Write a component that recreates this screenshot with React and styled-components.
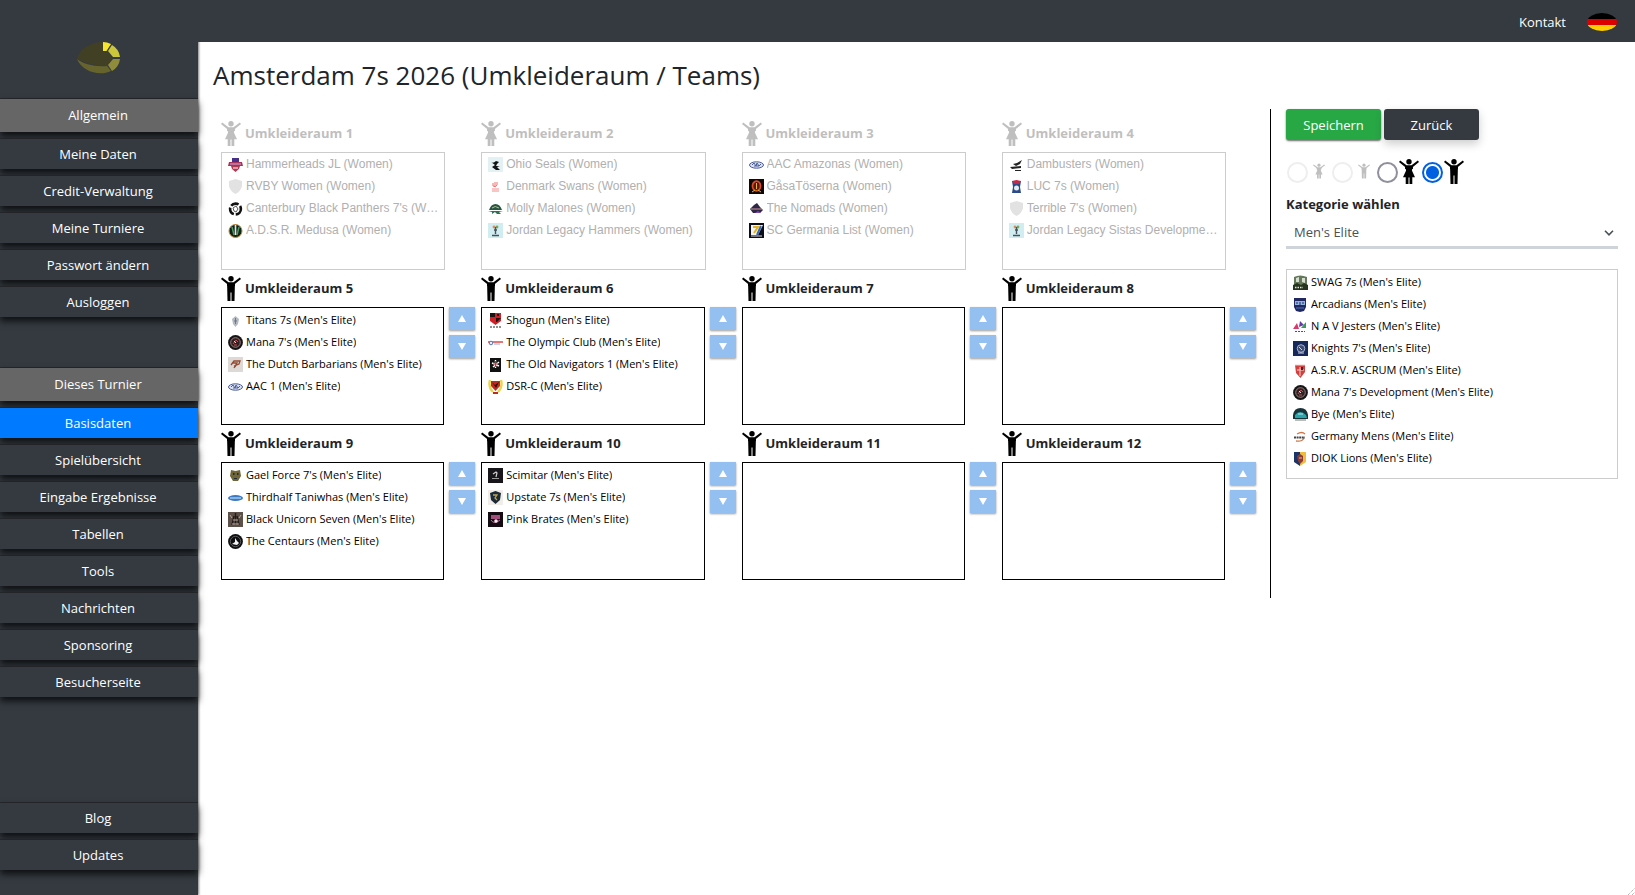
import { useState } from "react";
import styled, { createGlobalStyle, css } from "styled-components";

const colors = {
  dark: "#343a40",
  section: "#666666",
  active: "#007bff",
  green: "#28a745",
  arrow: "#93bff1",
  text: "#212529",
  muted: "#bfbfbf",
};

const GlobalStyle = createGlobalStyle`
  *, *::before, *::after { box-sizing: border-box; }
  body {
    margin: 0;
    background: #fff;
    color: ${colors.text};
    font-family: "Segoe UI", "Open Sans", "Noto Sans", sans-serif;
    font-size: 13px;
    line-height: 20px;
  }
`;

const Layout = styled.div`
  display: flex;
  position: relative;
  min-height: 100vh;
`;

const Sidebar = styled.nav`
  display: flex;
  flex: 0 0 198px;
  flex-direction: column;
  padding-bottom: 25px;
  background: ${colors.dark};
  box-shadow: 1px 0 2px rgba(0, 0, 0, 0.5);
`;

const LogoLink = styled.a`
  display: flex;
  justify-content: center;
  height: 99px;
  padding: 42px 2px 0 0;
`;

const MenuGroup = styled.div`
  display: flex;
  flex-direction: column;
  gap: 7px;
  margin-bottom: 51px;

  &:last-child {
    margin: auto 0 0;
  }
`;

const menuBox = css`
  padding-right: 2px;
  box-shadow: 0 4px 7px rgba(0, 0, 0, 0.75), 0 -1px 0 #25282c;
  color: #fff;
  font-size: 13px;
  text-align: center;
`;

const MenuTitle = styled.div`
  ${menuBox}
  background: ${colors.section};
  line-height: 33px;
`;

const MenuLink = styled.a`
  ${menuBox}
  background: ${({ $active }) => ($active ? colors.active : colors.dark)};
  line-height: 30px;
  text-decoration: none;
`;

const Page = styled.div`
  flex: 1;
  min-width: 0;
`;

const TopBar = styled.header`
  display: flex;
  align-items: center;
  justify-content: flex-end;
  gap: 21px;
  height: 42px;
  padding: 2px 18px 0 0;
  background: ${colors.dark};
`;

const TopLink = styled.a`
  color: #fff;
  text-decoration: none;
`;

const LangButton = styled.button`
  display: flex;
  padding: 0;
  border: 0;
  background: none;
`;

const Title = styled.h1`
  margin: 0;
  padding: 14px 15px 0;
  font-size: 26px;
  font-weight: 400;
  line-height: 38px;
`;

const Content = styled.main`
  display: flex;
  padding: 15px 0 0 15px;
`;

const Rooms = styled.section`
  display: grid;
  flex: 1;
  grid-template-columns: repeat(4, minmax(0, 1fr));
  align-content: start;
  gap: 6px;
  min-width: 0;
  padding: 12px 14px 18px 8px;
`;

const RoomTitle = styled.h2`
  display: flex;
  gap: 4px;
  height: 31px;
  margin: 0;
  color: ${({ $muted }) => ($muted ? colors.muted : colors.text)};
  font-size: 13px;
  font-weight: 700;
  line-height: 24px;
`;

const RoomBody = styled.div`
  display: flex;
  gap: 5px;
  padding-right: ${({ $muted }) => ($muted ? "30px" : "0")};
`;

const TeamList = styled.ul`
  flex: 1;
  min-width: 0;
  min-height: ${({ $tall }) => ($tall ? "210px" : "118px")};
  margin: 0;
  padding: ${({ $muted }) => ($muted ? "0 0 0 6px" : "1px 0 0 6px")};
  border: 1px solid ${({ $border }) => $border};
  color: ${({ $muted }) => ($muted ? "#b0b0b0" : "#000")};
  font-family: ${({ $muted }) => ($muted ? '"Liberation Sans", Arial, sans-serif' : "inherit")};
  font-size: ${({ $muted }) => ($muted ? "12px" : "11px")};
  list-style: none;
`;

const TeamRow = styled.li`
  display: flex;
  align-items: center;
  gap: 3px;
  line-height: 22px;

  svg {
    flex: none;
  }
`;

const TeamName = styled.span`
  overflow: hidden;
  max-width: 195px;
  text-overflow: ellipsis;
  white-space: nowrap;
`;

const Arrows = styled.div`
  display: flex;
  flex-direction: column;
  gap: 5px;
`;

const ArrowButton = styled.button`
  display: flex;
  align-items: center;
  justify-content: center;
  width: 26px;
  height: 23px;
  padding: 0;
  border: 0;
  background: ${colors.arrow};
  box-shadow: 0 1px 2px rgba(0, 0, 0, 0.4);
`;

const Panel = styled.aside`
  flex: 0 0 365px;
  padding: 0 17px 0 15px;
  border-left: 1px solid #000;
`;

const Buttons = styled.div`
  display: flex;
  gap: 3px;
`;

const Button = styled.button`
  width: 95px;
  height: 31px;
  padding: 0;
  border: 0;
  border-radius: 3px;
  background: ${({ $primary }) => ($primary ? colors.green : colors.dark)};
  box-shadow: ${({ $primary }) =>
    $primary ? "0 1px 2px rgba(0, 0, 0, 0.6)" : "0 4px 10px rgba(0, 0, 0, 0.2)"};
  color: #fff;
  font: inherit;
`;

const Genders = styled.div`
  display: flex;
  align-items: center;
  height: 28px;
  margin-top: 18px;
  padding-left: 1px;
`;

const GenderLabel = styled.label`
  display: flex;
  align-items: center;
  width: 45px;

  svg {
    margin: ${({ $small }) => ($small ? "0 0 2px 5px" : "0 0 2px 1px")};
  }
`;

const Radio = styled.input`
  appearance: none;
  flex: none;
  width: 21px;
  height: 21px;
  margin: 1px 0 0;
  border: 2px solid #8f8f9d;
  border-radius: 50%;

  &:checked {
    border-color: #0060df;
    background: radial-gradient(circle, #0060df 6px, #fff 7px);
  }

  &:disabled {
    border-color: #eeeeef;
  }
`;

const CategoryLabel = styled.label`
  display: block;
  margin-top: 8px;
  font-weight: 700;
  line-height: 20px;
`;

const SelectWrap = styled.div`
  display: grid;
  align-items: center;
  margin: 4px 0 20px;

  select,
  svg {
    grid-area: 1 / 1;
  }

  svg {
    justify-self: end;
    margin: 0 4px 2px 0;
    pointer-events: none;
  }
`;

const Select = styled.select`
  appearance: none;
  width: 100%;
  height: 31px;
  padding: 0 8px;
  border: 0;
  border-bottom: 3px solid #ced4da;
  background: #fff;
  color: #495057;
  font: inherit;
`;

const ResizeGrip = styled.svg`
  position: absolute;
  right: 0;
  bottom: 0;
`;

const Person = ({ female, small, color = "#000" }) => (
  <svg width={small ? 12 : 20} height={small ? 16 : 25} viewBox="0 0 20 25" fill={color} aria-hidden="true">
    <circle cx="10" cy="2.8" r="2.7" />
    <path d="M0 2.9 1.2 1.500 7.500 6.200H12.500L18.800 1.500 20 2.900 13.900 8V10H6.100V8Z" />
    {female ? (
      <path d="M6.300 8H13.700L12.900 11.500 16 18.200H13.300V25H10.500V18.500H9.500V25H6.700V18.200H4L7.100 11.500Z" />
    ) : (
      <path d="M6.100 8H13.900L13.500 25H10.500V16.500H9.500V25H6.500Z" />
    )}
  </svg>
);

const Logo = () => (
  <svg width="43" height="32" viewBox="0 0 43 32" aria-label="Logo">
    <path d="M0 16C4 6 14 0 26 0V9L31 10 35 16 31 24C20 24 6 21 0 16Z" fill="#424024" />
    <path d="M0 17C6 22 18 25 30 24L34 29C22 35 5 29 0 17Z" fill="#66642c" />
    <path d="M26 0Q30 0 34 2L29.5 9H26Z" fill="#f5e62c" />
    <path d="M35 3Q42 7 43 15H36L31 9Z" fill="#ccc63a" />
    <path d="M36 17H43Q42 25 35 29L31 23Z" fill="#8f8c3b" />
  </svg>
);

const Flag = () => (
  <svg width="30" height="18" viewBox="0 0 30 18" aria-label="Deutsch">
    <clipPath id="flag">
      <ellipse cx="15" cy="9" rx="15" ry="9" />
    </clipPath>
    <g clipPath="url(#flag)">
      <rect width="30" height="6" fill="#000" />
      <rect y="6" width="30" height="6" fill="#d00" />
      <rect y="12" width="30" height="6" fill="#ffce00" />
    </g>
  </svg>
);

const Triangle = ({ down }) => (
  <svg width="8" height="7" viewBox="0 0 8 7" fill="#fff" aria-hidden="true">
    <path d={down ? "M0 0H8L4 7Z" : "M4 0 8 7H0Z"} />
  </svg>
);

// club crests, all drawn on a 15 x 15 grid
const crests = {
  hammer: (
    <>
      <path d="M4 1H11V5H4Z" fill="#46308a" />
      <path d="M1 5H14L15 9H0Z" fill="#a8325a" />
      <path d="M2 7H13" stroke="#c9b4dc" />
      <path d="M3 9H12L11 12 7.5 15 4 12Z" fill="#b33a52" />
      <path d="M5 11H10" stroke="#fff" />
    </>
  ),
  shield: <path d="M7.5 0 14 2V7Q13 12 7.5 15Q2 12 1 7V2Z" fill="#e2e2e2" />,
  panther: (
    <>
      <circle cx="7.5" cy="8" r="5.4" fill="#fff" stroke="#111" strokeWidth="2.6" strokeDasharray="8 2" />
      <path d="M5 7 8 5 10 8 8 11 6 10Z" fill="none" stroke="#555" strokeWidth="1" />
    </>
  ),
  medusa: (
    <>
      <circle cx="7.5" cy="8" r="6.5" fill="#10231a" stroke="#b98a3c" />
      <path d="M4 4 6 12M11 4 9 12" stroke="#4c9a58" strokeWidth="1.5" />
      <path d="M7.5 2V12" stroke="#dfe8df" strokeWidth="1.6" />
    </>
  ),
  seal: (
    <>
      <rect width="15" height="15" fill="#e3f1f5" />
      <path d="M3 5Q5 7 8 4L11 5 9 7 8 9 12 9 9 10 12 13H8L4 10 7 8Z" fill="#111" />
    </>
  ),
  swan: (
    <>
      <path d="M5 4V7Q8 9 9 6V3M7 3V8" fill="none" stroke="#f07070" />
      <path d="M4 10H11M4 12H11" stroke="#f48a8a" />
    </>
  ),
  turtle: (
    <>
      <path d="M1 9Q3 3 7.5 3Q12 3 14 9Z" fill="#245644" />
      <path d="M4 7Q7 4 11 7" stroke="#c7b98c" fill="none" />
      <path d="M0 10H15L11 11 13 13H9L7 11 4 13 4 11Z" fill="#2f7055" />
    </>
  ),
  jordan: (
    <>
      <rect width="15" height="15" fill="#d2edf2" />
      <circle cx="6" cy="4" r="1.4" fill="#e08b62" />
      <circle cx="9" cy="4" r="1.4" fill="#7aa860" />
      <path d="M7.5 4V11M6 7H9M4 12.5H11" stroke="#46525a" strokeWidth="1.4" />
    </>
  ),
  aac: (
    <>
      <ellipse cx="7.5" cy="8" rx="7" ry="3.2" fill="#dbe1f2" stroke="#4a5c98" />
      <path d="M3 8 5 6 7 9 8 6 10 9 12 7M5 9H10" fill="none" stroke="#4a5c98" />
    </>
  ),
  gasa: (
    <>
      <rect width="15" height="15" fill="#100808" />
      <ellipse cx="7.5" cy="7" rx="4" ry="4.8" fill="#55180c" stroke="#dd4a28" strokeWidth="1.8" />
      <path d="M7.5 4V10M3 13 6 11M12 13 9 11" stroke="#e7b13a" />
    </>
  ),
  nomads: (
    <>
      <path d="M1 8 5 4 8 2 11 6 14 9 11 12H4Z" fill="#302645" />
      <path d="M2 8H13" stroke="#cf9a9a" />
      <path d="M6 12 9 10 12 12Z" fill="#8247b5" />
    </>
  ),
  germania: (
    <>
      <rect width="15" height="15" fill="#0b0d18" />
      <path d="M2 2H14L9 12H2Z" fill="#f3f3f3" />
      <path d="M4 4H9L5 10" fill="none" stroke="#e0b421" strokeWidth="2" />
      <path d="M12 3 8 12" stroke="#3b66b0" strokeWidth="2" />
      <path d="M2 13H13" stroke="#ddd" />
    </>
  ),
  dambusters: (
    <path d="M4 7 8 6 13 3 11 7 7 9ZM1 10 12 9V11L3 12ZM6 13H12V14H6Z" fill="#222" />
  ),
  luc: (
    <>
      <path d="M3 2H12L11 8 12 14H3L4 8Z" fill="#2b4a86" />
      <path d="M3 2 7.5 1 12 2 10 5H5Z" fill="#c52848" />
      <circle cx="7.5" cy="9" r="2.5" fill="#e3ecf5" />
    </>
  ),
  titans: (
    <>
      <path d="M7.5 3 11 6 10 11 7.5 14 5 11 4 6Z" fill="#b4bac2" />
      <path d="M7.5 5V11M6 8H9" stroke="#6c7a8a" />
    </>
  ),
  mana: (
    <>
      <circle cx="7.5" cy="7.5" r="7.4" fill="#161414" />
      <circle cx="7.5" cy="7.5" r="4.8" fill="#2c2224" stroke="#a07a7a" />
      <path d="M5 9 8 5 10 7M6 10H9" stroke="#cf4a4a" fill="none" />
      <path d="M6 6 8 8" stroke="#ddd" />
    </>
  ),
  dutch: (
    <>
      <rect width="15" height="15" fill="#dcd9d6" />
      <path d="M3 8 6 4 12 4 11 7 6 9M5 6H9L6 11M9 6 7 10" fill="none" stroke="#96492f" strokeWidth="1.3" />
    </>
  ),
  shogun: (
    <>
      <path d="M2 0H13V8L7.5 12 2 8Z" fill="#cd2027" />
      <path d="M2 0H7V4H2ZM8 5H13L9 9H8ZM9 1H11V3H9Z" fill="#1c1213" />
      <path d="M2 14H13" stroke="#222" strokeDasharray="2 1" />
    </>
  ),
  olympic: (
    <>
      <path d="M0 7H15" stroke="#e47676" strokeWidth="2" />
      <circle cx="3" cy="8" r="1.8" fill="#e6ecf8" stroke="#5878b8" />
      <path d="M6 9H12" stroke="#98a8cc" />
    </>
  ),
  navigators: (
    <>
      <path d="M2 1H13V15H2Z" fill="#111" />
      <path d="M7.5 3V11M4 6 11 9M11 5 5 10" stroke="#fff" strokeWidth="1.4" />
      <path d="M7.5 4V10M5 7H10" stroke="#d22c3a" strokeWidth="1.2" />
    </>
  ),
  dsr: (
    <>
      <path d="M2 1Q0 8 5 13M13 1Q15 8 10 13" fill="none" stroke="#ead64a" strokeWidth="2.4" />
      <path d="M3 2H12V7L7.5 12 3 7Z" fill="#c22a24" />
      <path d="M4 3 7 6 11 3 8 9Z" fill="#2a1512" />
      <path d="M5 14H10" stroke="#c22a24" strokeWidth="2" />
    </>
  ),
  gael: (
    <>
      <path d="M3 2 7.5 3 12 2 13 8 10 13H5L2 8Z" fill="#6f6536" />
      <path d="M5 5H6.500V7H5ZM9 5H10.500V7H9ZM6 10H9V11H6Z" fill="#1d2d3c" />
    </>
  ),
  taniwhas: (
    <>
      <ellipse cx="7.500" cy="8" rx="7.500" ry="3" fill="#3d78c2" />
      <path d="M2 8H13" stroke="#a7d0f0" strokeWidth="1.4" />
    </>
  ),
  unicorn: (
    <>
      <rect width="15" height="15" fill="#5d5048" />
      <path d="M7.500 1V13M4 13 6 4M11 13 9 4" stroke="#211c1a" strokeWidth="1.4" />
      <path d="M5 8H10M2 3 4 6M13 3 11 6M4 12H11" stroke="#b8a898" />
    </>
  ),
  centaurs: (
    <>
      <circle cx="7.500" cy="7.500" r="7.400" fill="#0e0e10" />
      <circle cx="7.500" cy="7.500" r="5.200" fill="none" stroke="#777" strokeWidth=".7" />
      <path d="M4 10 7 8 7 4 9 7 11 9 9 11Z" fill="#f4f4f4" />
    </>
  ),
  scimitar: (
    <>
      <rect width="15" height="15" fill="#18161a" />
      <path d="M5 6 8 4 9 5 8 9" stroke="#d0d0d0" strokeWidth="1.200" fill="none" />
      <path d="M4 10.500H11" stroke="#999" />
    </>
  ),
  upstate: (
    <>
      <rect width="15" height="15" fill="#f1eeea" />
      <path d="M2 3 7.500 1 13 3 12 10 7.500 14 3 10Z" fill="#1a2a38" />
      <path d="M5 5H9L7 8 9 10" fill="none" stroke="#c0a44a" strokeWidth="1.300" />
    </>
  ),
  pink: (
    <>
      <rect width="15" height="15" fill="#140c12" />
      <path d="M3 4H12M3 6H12" stroke="#d264a0" strokeWidth="1.500" />
      <path d="M3 8Q6 13 12 8" stroke="#d264a0" fill="none" />
      <circle cx="8" cy="9" r="1.800" fill="#eee" />
    </>
  ),
  swag: (
    <>
      <path d="M1 2Q7 -1 14 2V14H1Z" fill="#64785a" />
      <path d="M3 3 6 2V7H3ZM9 3H12V8L9 7Z" fill="#d5ddd0" />
      <path d="M0 10 4 8 8 10 11 8 15 10V15H0Z" fill="#26351f" />
      <path d="M2 12.500H10" stroke="#e2e8dc" strokeWidth="1.500" strokeDasharray="1.500 1" />
    </>
  ),
  arcadians: (
    <>
      <path d="M1 1H13V10L11 14 7 15 3 14 1 10Z" fill="#20285f" />
      <path d="M2 4H12V8H2Z" fill="#8fb4e2" />
      <path d="M4 5V7M7 5V8M10 5V7" stroke="#20285f" />
      <path d="M3 11H11" stroke="#4a77c0" />
    </>
  ),
  jesters: (
    <>
      <path d="M0 10 4 4 6 10Z" fill="#d83a6c" />
      <path d="M6 8 7 2 11 6Z" fill="#6c3aa4" />
      <path d="M8 9 13 3V9Z" fill="#3a9a5c" />
      <path d="M2 12.500H12" stroke="#555" strokeDasharray="2 1" />
    </>
  ),
  knights: (
    <>
      <rect width="15" height="15" fill="#17295a" />
      <circle cx="8" cy="7.500" r="3.800" fill="#3c4c74" stroke="#aab4c8" />
      <path d="M6 6 9 9M5 12H11" stroke="#d0d6e0" />
    </>
  ),
  ascrum: (
    <>
      <path d="M2 2H12V9L7.500 15 3 10Z" fill="#d0403e" />
      <path d="M2 2H12M7 4V13M4 7H11" stroke="#f0d0cc" />
      <path d="M8 4H10V7H8Z" fill="#4a2222" />
    </>
  ),
  bye: (
    <>
      <path d="M0 8Q1 1 7.500 1Q14 1 15 8V12H0Z" fill="#183338" />
      <path d="M2 8Q7 2 13 8L14 11H2Z" fill="#2ba5ac" />
      <path d="M5 7H10" stroke="#bdeaec" />
      <path d="M2 13H13" stroke="#bbb" strokeWidth="2" />
    </>
  ),
  germany: (
    <>
      <path d="M4 5Q9 2 12 5M3 12Q9 13 11 9" fill="none" stroke="#d07848" strokeWidth="1.300" />
      <path d="M1 8.500H12" stroke="#444" strokeWidth="2" strokeDasharray="2 .6" />
    </>
  ),
  diok: (
    <>
      <path d="M1 1H7V15L1 11Z" fill="#1c3468" />
      <path d="M7 1H13V11L7 15Z" fill="#f0bc3c" />
      <path d="M4 5 7 3 10 5V10L7 13 5 10Z" fill="#8c3b30" />
      <path d="M6 7H9" stroke="#e6b8a0" />
    </>
  ),
};

const Crest = ({ name }) => (
  <svg width="15" height="15" viewBox="0 0 15 15" aria-hidden="true">
    {crests[name]}
  </svg>
);

const menus = [
  {
    title: "Allgemein",
    items: ["Meine Daten", "Credit-Verwaltung", "Meine Turniere", "Passwort ändern", "Ausloggen"],
  },
  {
    title: "Dieses Turnier",
    items: [
      "Basisdaten",
      "Spielübersicht",
      "Eingabe Ergebnisse",
      "Tabellen",
      "Tools",
      "Nachrichten",
      "Sponsoring",
      "Besucherseite",
    ],
  },
  { items: ["Blog", "Updates"] },
];

const women = [
  [
    ["hammer", "Hammerheads JL"],
    ["shield", "RVBY Women"],
    ["panther", "Canterbury Black Panthers 7's"],
    ["medusa", "A.D.S.R. Medusa"],
  ],
  [
    ["seal", "Ohio Seals"],
    ["swan", "Denmark Swans"],
    ["turtle", "Molly Malones"],
    ["jordan", "Jordan Legacy Hammers"],
  ],
  [
    ["aac", "AAC Amazonas"],
    ["gasa", "GåsaTöserna"],
    ["nomads", "The Nomads"],
    ["germania", "SC Germania List"],
  ],
  [
    ["dambusters", "Dambusters"],
    ["luc", "LUC 7s"],
    ["shield", "Terrible 7's"],
    ["jordan", "Jordan Legacy Sistas Development"],
  ],
];

const men = [
  [
    ["titans", "Titans 7s"],
    ["mana", "Mana 7's"],
    ["dutch", "The Dutch Barbarians"],
    ["aac", "AAC 1"],
  ],
  [
    ["shogun", "Shogun"],
    ["olympic", "The Olympic Club"],
    ["navigators", "The Old Navigators 1"],
    ["dsr", "DSR-C"],
  ],
  [],
  [],
  [
    ["gael", "Gael Force 7's"],
    ["taniwhas", "Thirdhalf Taniwhas"],
    ["unicorn", "Black Unicorn Seven"],
    ["centaurs", "The Centaurs"],
  ],
  [
    ["scimitar", "Scimitar"],
    ["upstate", "Upstate 7s"],
    ["pink", "Pink Brates"],
  ],
  [],
  [],
];

const unassigned = [
  ["swag", "SWAG 7s"],
  ["arcadians", "Arcadians"],
  ["jesters", "N A V Jesters"],
  ["knights", "Knights 7's"],
  ["ascrum", "A.S.R.V. ASCRUM"],
  ["mana", "Mana 7's Development"],
  ["bye", "Bye"],
  ["germany", "Germany Mens"],
  ["diok", "DIOK Lions"],
];

const rooms = [
  ...women.map((teams) => ({ teams, female: true })),
  ...men.map((teams) => ({ teams, female: false })),
];

const genders = [
  { id: "girls", label: "Mädchen", female: true, small: true },
  { id: "boys", label: "Jungen", small: true },
  { id: "women", label: "Damen", female: true },
  { id: "men", label: "Herren" },
];

const Teams = ({ teams, category, ...rest }) => (
  <TeamList {...rest}>
    {teams.map(([crest, name]) => (
      <TeamRow key={name}>
        <Crest name={crest} />
        <TeamName>
          {name} ({category})
        </TeamName>
      </TeamRow>
    ))}
  </TeamList>
);

const Room = ({ number, teams, female }) => (
  <div>
    <RoomTitle $muted={female}>
      <Person female={female} color={female ? colors.muted : "#000"} />
      Umkleideraum {number}
    </RoomTitle>
    <RoomBody $muted={female}>
      <Teams
        teams={teams}
        category={female ? "Women" : "Men's Elite"}
        $muted={female}
        $border={female ? "#cccccc" : "#000"}
      />
      {!female && (
        <Arrows>
          <ArrowButton type="button" aria-label="Nach oben">
            <Triangle />
          </ArrowButton>
          <ArrowButton type="button" aria-label="Nach unten">
            <Triangle down />
          </ArrowButton>
        </Arrows>
      )}
    </RoomBody>
  </div>
);

export default function App() {
  const [gender, setGender] = useState("men");

  return (
    <>
      <GlobalStyle />
      <Layout>
        <Sidebar>
          <LogoLink href="#">
            <Logo />
          </LogoLink>
          {menus.map(({ title, items }) => (
            <MenuGroup key={items[0]}>
              {title && <MenuTitle>{title}</MenuTitle>}
              {items.map((item) => (
                <MenuLink key={item} href="#" $active={item === "Basisdaten"}>
                  {item}
                </MenuLink>
              ))}
            </MenuGroup>
          ))}
        </Sidebar>
        <Page>
          <TopBar>
            <TopLink href="#">Kontakt</TopLink>
            <LangButton type="button">
              <Flag />
            </LangButton>
          </TopBar>
          <Title>Amsterdam 7s 2026 (Umkleideraum / Teams)</Title>
          <Content>
            <Rooms>
              {rooms.map((room, i) => (
                <Room key={i} number={i + 1} {...room} />
              ))}
            </Rooms>
            <Panel>
              <Buttons>
                <Button type="button" $primary>
                  Speichern
                </Button>
                <Button type="button">Zurück</Button>
              </Buttons>
              <Genders>
                {genders.map(({ id, label, female, small }) => (
                  <GenderLabel key={id} $small={small}>
                    <Radio
                      type="radio"
                      name="gender"
                      aria-label={label}
                      disabled={small}
                      checked={gender === id}
                      onChange={() => setGender(id)}
                    />
                    <Person female={female} small={small} color={small ? colors.muted : "#000"} />
                  </GenderLabel>
                ))}
              </Genders>
              <CategoryLabel htmlFor="category">Kategorie wählen</CategoryLabel>
              <SelectWrap>
                <Select id="category" defaultValue="elite">
                  <option value="elite">Men's Elite</option>
                </Select>
                <svg width="10" height="6" viewBox="0 0 10 6" fill="none" stroke="#495057" strokeWidth="1.6">
                  <path d="M1 .8 5 4.800 9 .8" />
                </svg>
              </SelectWrap>
              <Teams teams={unassigned} category="Men's Elite" $tall $border="#cccccc" />
            </Panel>
          </Content>
        </Page>
        <ResizeGrip width="8" height="8" viewBox="0 0 8 8" stroke="#999" strokeDasharray="1 1" aria-hidden="true">
          <path d="M1 8 8 1M5 8 8 5" />
        </ResizeGrip>
      </Layout>
    </>
  );
}
